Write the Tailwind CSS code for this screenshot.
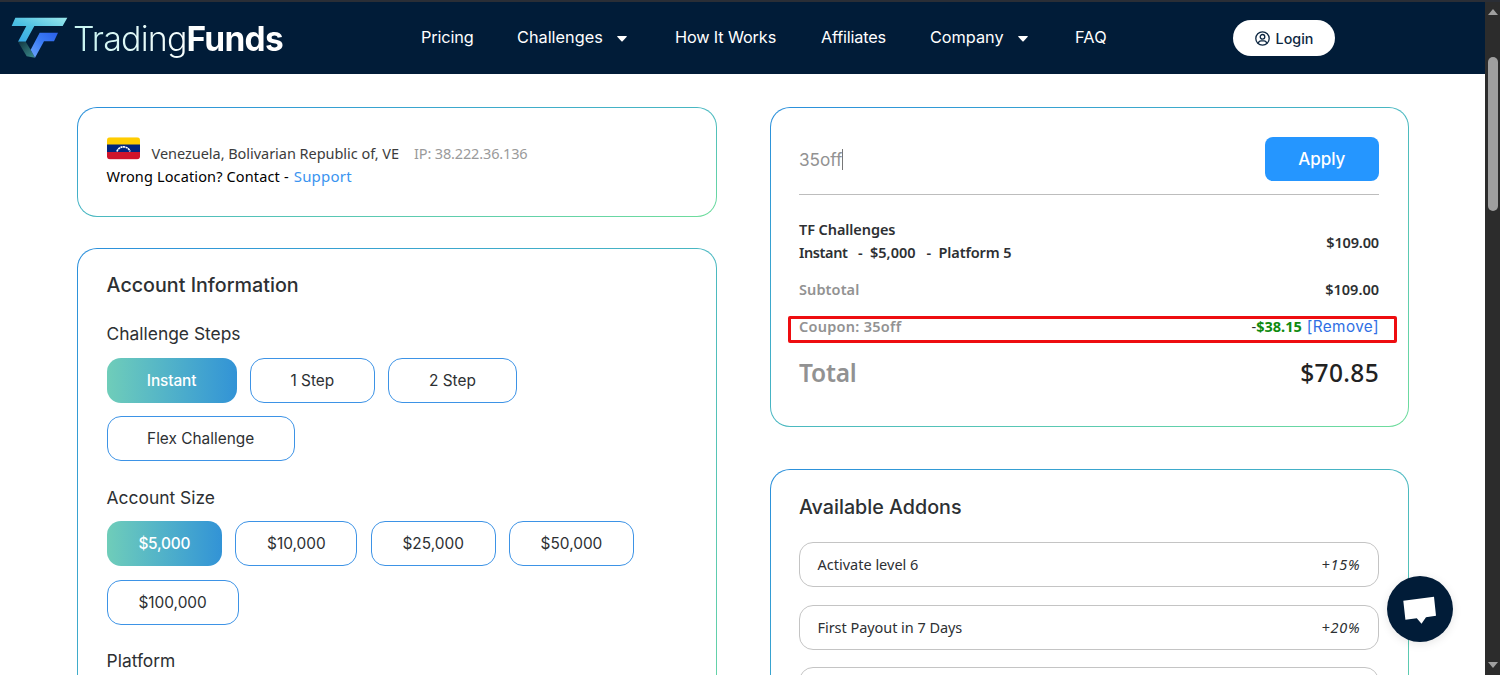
<!DOCTYPE html>
<html lang="en">
<head>
<meta charset="utf-8">
<title>TradingFunds</title>
<script src="https://cdn.jsdelivr.net/npm/@tailwindcss/browser@4"></script>
</head>
<body class="h-[675px] w-[1500px] overflow-hidden bg-white font-['Inter',sans-serif] text-[#2d3033]">
<div class="relative flex h-full">
  <div class="flex h-full w-[1485px] flex-col overflow-hidden">
    <header class="flex h-[74px] shrink-0 items-center border-t-2 border-[#2a2e36] bg-[#011c38] pb-[2px] text-white">
      <a class="flex w-[421px] items-center pl-[11px]">
        <svg class="mt-px h-[42px] w-[57px]" viewBox="34 52 171 126">
          <defs>
            <linearGradient id="t" x1="0" y1="1" x2="1" y2="0"><stop offset="0" stop-color="#35a6e6"/><stop offset=".45" stop-color="#4cc0e2"/><stop offset="1" stop-color="#9be8ec"/></linearGradient>
            <linearGradient id="f" x1="0" y1="1" x2="1" y2="0"><stop offset="0" stop-color="#6ea6fb"/><stop offset=".5" stop-color="#3b7cf5"/><stop offset="1" stop-color="#2a5fe8"/></linearGradient>
            <linearGradient id="g" x1="0" y1="0" x2="1" y2="1"><stop offset="0" stop-color="#12343f"/><stop offset="1" stop-color="#3d8f8f"/></linearGradient>
          </defs>
          <path d="M47 54H203L189 79H104L78 126H55L80 79H36Z" fill="url(#t)"/>
          <path d="M55 126H78L93 150L106 174L81 170Z" fill="url(#g)"/>
          <path d="M120 99H175L163 125H133L106 174L93 150Z" fill="url(#f)"/>
        </svg>
        <span class="mt-[3px] ml-[5px] bg-linear-to-r from-[#c4f3f0] to-white to-60% bg-clip-text pr-1 text-[34px] leading-[46px] font-light tracking-[-0.85px] text-transparent">Trading<span class="text-[33.5px] font-bold tracking-[-0.75px]">Funds</span></span>
      </a>
      <nav class="flex text-[16.3px] tracking-[-0.15px]">
        <a class="w-24">Pricing</a>
        <a class="flex w-[158px] items-center gap-[14px] tracking-[0px]">Challenges<svg class="mt-1 h-[6px] w-[10px]" viewBox="0 0 10 6"><path d="M.6 0H9.4Q10.2.2 9.5 1L5.6 5.3Q5 5.9 4.4 5.3L.5 1Q-.2.2.6 0Z" fill="#fff"/></svg></a>
        <a class="w-[146px]">How It Works</a>
        <a class="w-[109px] tracking-[-0.2px]">Affiliates</a>
        <a class="flex w-[145px] items-center gap-[14px] tracking-[-0.02px]">Company<svg class="mt-1 h-[6px] w-[10px]" viewBox="0 0 10 6"><path d="M.6 0H9.4Q10.2.2 9.5 1L5.6 5.3Q5 5.9 4.4 5.3L.5 1Q-.2.2.6 0Z" fill="#fff"/></svg></a>
        <a class="w-[158px] tracking-[0.2px]">FAQ</a>
      </nav>
      <button class="mt-[2px] flex h-[36.5px] w-[102px] items-center justify-center gap-[6px] rounded-full bg-white pt-px text-[14.3px] font-medium text-[#0d2742]">
        <svg class="h-[15px] w-[15px]" viewBox="0 0 15 15" fill="none" stroke="#0d2742" stroke-width="1.3"><circle cx="7.5" cy="7.5" r="6.7"/><circle cx="7.5" cy="5.8" r="2.3"/><path d="M3.2 12.4C3.7 10.5 5 9.9 6 9.9H9C10 9.9 11.3 10.5 11.8 12.4"/></svg>Login
      </button>
    </header>

    <main class="flex gap-[53px] pt-[33px] pl-[77px]">
      <div class="flex w-[640px] flex-col gap-[31px]">
        <section class="h-[110px] rounded-[20px] bg-linear-to-br from-[#2b8fdc] to-[#6fdd9c] p-px">
          <div class="h-full rounded-[19px] bg-white pt-[28px] pl-[28.6px] font-['Noto_Sans',sans-serif] text-[14.5px] leading-[24px]">
            <div class="flex h-[24px]">
              <svg class="mt-[1px] mr-[11px] h-[23px] w-[33px]" viewBox="0 0 34 23"><clipPath id="c"><rect width="34" height="22.5" rx="3"/></clipPath><g clip-path="url(#c)"><path d="M0 0H34V8H0Z" fill="#fc0"/><path d="M0 7.5H34V15.5H0Z" fill="#00247d"/><path d="M0 15H34V23H0Z" fill="#cf142b"/></g><path d="M10.3 14.5A7 6.6 0 0 1 23.7 14.5" fill="none" stroke="#fff" stroke-width="1.7" stroke-dasharray="2.2 .5"/></svg>
              <span class="mt-[5px] ml-px tracking-[-0.04px] text-[#3c3c3c]">Venezuela, Bolivarian Republic of, VE</span>
              <span class="mt-[5px] ml-[15px] tracking-[-0.15px] text-[#9a9a9a]">IP: 38.222.36.136</span>
            </div>
            <div class="mt-[5px] flex leading-[22px] tracking-[0.14px] text-black">Wrong Location? Contact -<span class="ml-[5px] text-[15px] tracking-[0.2px] text-[#3a94f0]">Support</span></div>
          </div>
        </section>

        <section class="h-[600px] rounded-[20px] bg-linear-to-br from-[#2b8fdc] to-[#6fdd9c] p-px">
          <div class="flex h-full flex-col rounded-[19px] bg-white px-[28.6px]">
            <h2 class="mt-[21px] text-[19.7px] leading-[30px] font-medium">Account Information</h2>
            <h3 class="mt-[19px] text-[17.4px] leading-[30px]">Challenge Steps</h3>
            <div class="mt-[9px] flex flex-wrap gap-[13.3px] text-[15.4px]">
              <button class="h-[45px] w-[130px] rounded-[14px] bg-linear-to-r from-[#6fcdb9] to-[#3293d6] font-medium tracking-[-0.1px] text-white">Instant</button>
              <button class="h-[45px] w-[125px] rounded-[14px] border border-[#3d93e6]">1 Step</button>
              <button class="h-[45px] w-[128.5px] rounded-[14px] border border-[#3d93e6]">2 Step</button>
              <button class="h-[45px] w-[188px] rounded-[14px] border border-[#3d93e6]">Flex Challenge</button>
            </div>
            <h3 class="mt-[21.5px] text-[17.4px] leading-[30px]">Account Size</h3>
            <div class="mt-[8.6px] flex flex-wrap gap-[13.3px] text-[15.4px]">
              <button class="h-[45px] w-[115.5px] rounded-[14px] bg-linear-to-r from-[#6fcdb9] to-[#3293d6] font-medium tracking-[-0.2px] text-white">$5,000</button>
              <button class="h-[45px] w-[122px] rounded-[14px] border border-[#3d93e6]">$10,000</button>
              <button class="h-[45px] w-[125px] rounded-[14px] border border-[#3d93e6]">$25,000</button>
              <button class="h-[45px] w-[125px] rounded-[14px] border border-[#3d93e6]">$50,000</button>
              <button class="h-[45px] w-[132px] rounded-[14px] border border-[#3d93e6]">$100,000</button>
            </div>
            <h3 class="mt-[21.5px] text-[17.4px] leading-[30px]">Platform</h3>
          </div>
        </section>
      </div>

      <div class="flex w-[639px] flex-col gap-[42px]">
        <section class="relative h-[320px] rounded-[20px] bg-linear-to-br from-[#2b8fdc] to-[#6fdd9c] p-px">
          <div class="h-full rounded-[19px] bg-white pt-[29px] pr-[29px] pl-[28px] font-['Noto_Sans',sans-serif] text-[14.5px] font-semibold">
            <div class="flex h-[58px] items-start justify-between border-b border-[#bdbdbd] font-['Inter',sans-serif]">
              <div class="flex h-[45px] items-center text-[17.2px] font-normal text-[#929292]">35off<span class="h-[21px] w-px bg-[#777]"></span></div>
              <button class="h-[44px] w-[114.5px] rounded-[8px] bg-[#2596ff] pt-[2px] text-[17px] font-medium text-white">Apply</button>
            </div>
            <div class="mt-[23px] flex h-[46px] items-center justify-between leading-[23px]">
              <div>
                <div class="tracking-[-0.08px]">TF Challenges</div>
                <div class="flex"><span class="w-[59px] tracking-[-0.4px]">Instant</span><span class="w-[12px]">-</span><span class="w-[56.5px]">$5,000</span><span class="w-[12px]">-</span><span class="tracking-[-0.1px]">Platform 5</span></div>
              </div>
              <span class="pt-[3px] tracking-[-0.15px]">$109.00</span>
            </div>
            <div class="mt-[13.5px] flex h-[24px] items-center justify-between"><span class="tracking-[0.1px] text-[#929292]">Subtotal</span><span>$109.00</span></div>
            <div class="mt-[13.5px] flex h-[24px] items-center justify-between"><span class="tracking-[0.27px] text-[#929292]">Coupon: 35off</span><span class="flex items-center"><span class="font-normal">-</span><span class="font-bold text-[#0f8a0f]">$38.15</span><span class="ml-[5px] font-['Inter',sans-serif] text-[15.3px] font-normal tracking-[0.4px] text-[#2f6fe4]">[Remove]</span></span></div>
            <div class="mt-[17px] flex h-[34px] items-center justify-between text-[24.5px]"><span class="tracking-[-0.2px] text-[#929292]">Total</span><span class="font-medium tracking-[0.35px] text-[#222]">$70.85</span></div>
          </div>
          <div class="absolute top-[209px] left-[18px] h-[27px] w-[609px] rounded-[2px] border-3 border-[#ee0d10]"></div>
        </section>

        <section class="h-[400px] rounded-[20px] bg-linear-to-br from-[#2b8fdc] to-[#6fdd9c] p-px">
          <div class="flex h-full flex-col rounded-[19px] bg-white pr-[29px] pl-[28px] font-['Noto_Sans',sans-serif] text-[14.5px]">
            <h2 class="mt-[22px] font-['Inter',sans-serif] text-[19.7px] leading-[30px] font-medium">Available Addons</h2>
            <div class="mt-[20px] flex flex-col gap-[17.7px]">
              <div class="flex h-[45px] items-center justify-between rounded-[14px] border border-[#c4c4c4] px-[17.5px] pt-px"><span>Activate level 6</span><i class="tracking-[0.8px]">+15%</i></div>
              <div class="flex h-[45px] items-center justify-between rounded-[14px] border border-[#c4c4c4] px-[17.5px] pt-px"><span class="tracking-[-0.05px]">First Payout in 7 Days</span><i class="tracking-[0.8px]">+20%</i></div>
              <div class="h-[45px] rounded-[14px] border border-[#c4c4c4]"></div>
            </div>
          </div>
        </section>
      </div>
    </main>
  </div>

  <aside class="flex h-full w-[15px] flex-col items-center border-t-2 border-[#2a2e36] bg-[#2c2c2c]">
    <svg class="mt-[7px] h-[6px] w-[10px]" viewBox="0 0 10 6"><path d="M5 0L10 6H0Z" fill="#a0a0a0"/></svg>
    <div class="mt-[42px] ml-px h-[154px] w-[10px] rounded-full bg-[#9f9f9f]"></div>
    <svg class="mt-auto mb-[7px] h-[6px] w-[10px]" viewBox="0 0 10 6"><path d="M5 6L10 0H0Z" fill="#a0a0a0"/></svg>
  </aside>

  <button class="absolute top-[576px] left-[1387px] h-[66px] w-[66px] rounded-full bg-[#011c38] shadow-[0_2px_10px_rgba(0,0,0,0.1)]">
    <svg class="h-full w-full" viewBox="0 0 66 66"><path d="M16.3 24.7L47 20.7L49 39.7L39 41.2L34.5 47.7L29.8 42.3L18.4 43.7Z" fill="#fff"/></svg>
  </button>
</div>
</body>
</html>
